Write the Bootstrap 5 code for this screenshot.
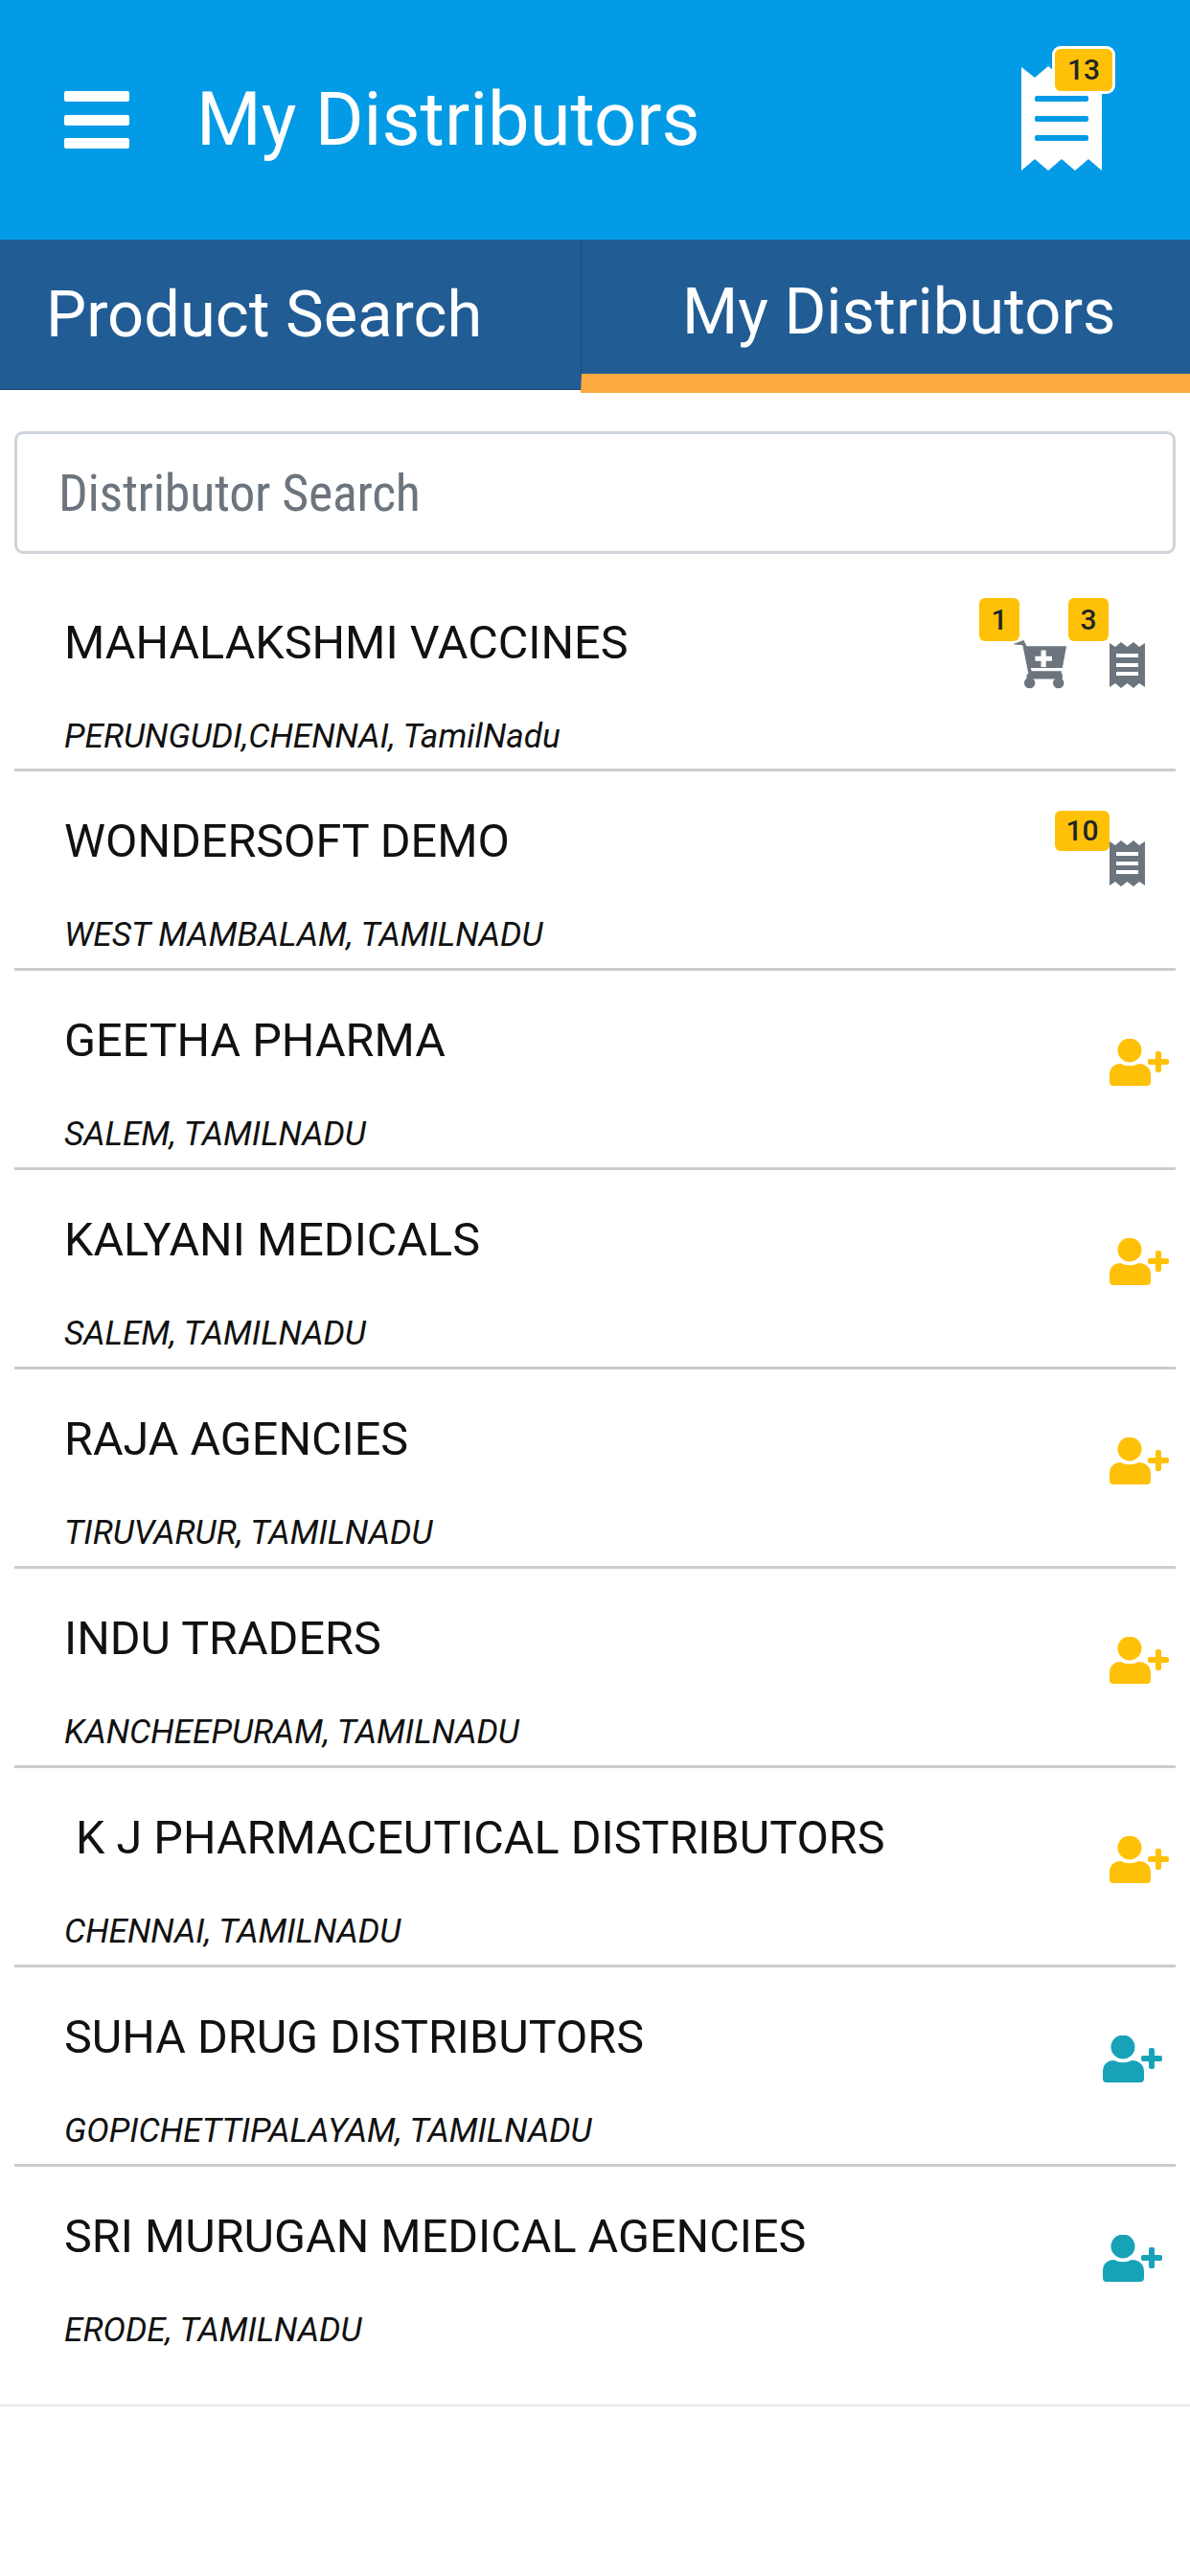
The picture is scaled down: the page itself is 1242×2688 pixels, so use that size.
<!DOCTYPE html>
<html lang="en">
<head>
    <meta charset="UTF-8">
    <meta name="viewport" content="width=device-width, initial-scale=1.0">
    <title>My Distributors</title>
    <link href="https://cdn.jsdelivr.net/npm/bootstrap@5.3.3/dist/css/bootstrap.min.css" rel="stylesheet">
    <style>
        body { font-family: Roboto, "Liberation Sans", sans-serif; background: #fff; }
        .app-bar { height: 250px; background: #039be5; padding: 0 92px 0 67px; }
        .menu-btn { width: 68px; height: 60px; margin-right: 70px; border: 0; background: none; padding: 0; }
        .app-title { font-size: 77.600px; line-height: 1; color: #fff; font-weight: 400; margin: 0; }
        .bill-wrap { position: relative; width: 84px; height: 111px; margin-bottom: 4px; }
        .count-tag { position: absolute; color: #212529; font-family: Roboto, sans-serif; font-weight: 500; font-size: 30px; line-height: 1; background: #ffc107; border-radius: 6px; padding: 0; display: flex; align-items: center; justify-content: center; }
        .tag-main { left: 32px; top: -20px; width: 66px; height: 50px; border: 3px solid #fff; border-radius: 9px; }
        .tab-strip { height: 157px; background: #215c94; }
        .tab-link { color: #fff; font-size: 66.800px; line-height: 1; height: 157px; display: flex; align-items: center; border-bottom: 1px solid #1c4a74; }
        .tab-link:hover { color: #fff; }
        .tab-one { width: 606px; padding: 0 0 0 48px; }
        .tab-two { width: 636px; height: 160px; padding: 10px 0 0 105px; border-left: 1px solid #1c4f80; border-bottom: 20px solid #fbab3f; }
        .search-box { padding: 43px 15px 19.500px; }
        .search-box .form-control { height: 128px; font-size: 54px; font-stretch: 75%; letter-spacing: -0.300px; padding: 0 43px; border: 3px solid #ced4da; border-radius: 9px; color: #6c757d; }
        .search-box .form-control::placeholder { color: #6c757d; }
        .list-group-flush .dist-row { height: 207.900px; margin: 0 15px; padding: 0; border: 0; border-bottom: 3px solid #ccc; border-radius: 0; position: relative; display: flex; justify-content: space-between; }
        .list-group-flush .dist-row.last-row { height: 250px; margin: 0; padding: 0 15px; border-bottom: 2px solid #e8e8e8; }
        .dist-name { font-size: 48.500px; line-height: 58px; color: #111; padding: 44px 0 0 52px; margin: 0; }
        .dist-place { font-size: 35.200px; line-height: 42px; font-style: italic; color: #111; padding: 47px 0 0 52px; margin: 0; }
        .dist-icons { position: relative; width: 210px; }
        .dist-icons svg { position: absolute; }
        .ico-cart { left: 40px; top: 70px; }
        .ico-bill { left: 141px; top: 71px; }
        .ico-gold { left: 141px; top: 71px; }
        .ico-teal { left: 134px; top: 71px; }
        .tag-cart { left: 5px; top: 26.500px; width: 42px; height: 45px; }
        .tag-bill { left: 98px; top: 26.500px; width: 42px; height: 45px; }
        .tag-wide { left: 84px; top: 40.500px; width: 57px; height: 42px; }
    </style>
</head>
<body>
    <header class="app-bar d-flex align-items-center">
        <button class="menu-btn d-flex flex-column justify-content-between" type="button" aria-label="Menu">
            <svg width="68" height="60" viewBox="0 0 68 60" fill="#fff"><rect y="0" width="68" height="11" rx="2"/><rect y="25" width="68" height="11" rx="2"/><rect y="49" width="68" height="11" rx="2"/></svg>
        </button>
        <h1 class="app-title flex-grow-1">My Distributors</h1>
        <div class="bill-wrap">
            <svg width="84" height="111" viewBox="0 0 84 111"><path fill="#fff" d="M0 2 L14 13 L28 1 L42 13 L56 1 L70 13 L84 2 V110 L70 98 L56 110 L42 98 L28 110 L14 98 L0 110 Z"/><rect x="14" y="32" width="56" height="6" rx="2" fill="#039be5"/><rect x="14" y="53" width="56" height="6" rx="2" fill="#039be5"/><rect x="14" y="73" width="56" height="6" rx="2" fill="#039be5"/></svg>
            <span class="count-tag tag-main">13</span>
        </div>
    </header>

    <nav class="nav tab-strip flex-nowrap">
        <a class="nav-link tab-link tab-one" href="#">Product Search</a>
        <a class="nav-link tab-link tab-two active" href="#">My Distributors</a>
    </nav>

    <div class="search-box">
        <input type="text" class="form-control" placeholder="Distributor Search">
    </div>

    <div class="list-group list-group-flush" id="dist-list"></div>

    <svg width="0" height="0" class="d-block">
        <symbol id="i-bill" viewBox="0 0 37 50"><path d="M0 2 L6 6 L12 1 L18.500 6 L25 1 L31 6 L37 2 V48 L31 44 L25 49 L18.500 44 L12 49 L6 44 L0 48 Z"/><rect x="7" y="13" width="23" height="4" fill="#fff"/><rect x="7" y="23" width="23" height="4" fill="#fff"/><rect x="7" y="32" width="23" height="4" fill="#fff"/></symbol>
        <symbol id="i-cart" viewBox="0 0 54 50"><path d="M0 4 L11 0 L14 6 H54 L50 28 H18 L19 31 H49 V35 H16 L10 5 Z"/><circle cx="17" cy="43" r="5.500"/><circle cx="46" cy="43" r="5.500"/><rect x="14" y="34" width="36" height="5"/><path fill="#fff" d="M28.500 10 h5 v6 h6 v5 h-6 v6 h-5 v-6 h-6 v-5 h6 z"/></symbol>
        <symbol id="i-user" viewBox="0 0 62 50"><circle cx="21" cy="12" r="12.500"/><path d="M0 38 C0 29 6 26 12 26 C17 29 25 29 30 26 C36 26 43 29 43 38 V45 Q43 49 39 49 H4 Q0 49 0 45 Z"/><rect x="40" y="21" width="22" height="6" rx="2"/><rect x="48" y="13" width="6" height="22" rx="2"/></symbol>
    </svg>

    <script>
        var distributors = [
            { name: "MAHALAKSHMI VACCINES", place: "PERUNGUDI,CHENNAI, TamilNadu", kind: "both" },
            { name: "WONDERSOFT DEMO", place: "WEST MAMBALAM, TAMILNADU", kind: "bill" },
            { name: "GEETHA PHARMA", place: "SALEM, TAMILNADU", kind: "gold" },
            { name: "KALYANI MEDICALS", place: "SALEM, TAMILNADU", kind: "gold" },
            { name: "RAJA AGENCIES", place: "TIRUVARUR, TAMILNADU", kind: "gold" },
            { name: "INDU TRADERS", place: "KANCHEEPURAM, TAMILNADU", kind: "gold" },
            { name: "\u00a0K J PHARMACEUTICAL DISTRIBUTORS", place: "CHENNAI, TAMILNADU", kind: "gold" },
            { name: "SUHA DRUG DISTRIBUTORS", place: "GOPICHETTIPALAYAM, TAMILNADU", kind: "teal" },
            { name: "SRI MURUGAN MEDICAL AGENCIES", place: "ERODE, TAMILNADU", kind: "teal" }
        ];

        function iconsFor(kind) {
            if (kind === "both") {
                return '<span class="count-tag tag-cart">1</span><svg class="ico-cart" width="56" height="52" fill="#6c757d"><use href="#i-cart"/></svg>' +
                    '<span class="count-tag tag-bill">3</span><svg class="ico-bill" width="37" height="50" fill="#6c757d"><use href="#i-bill"/></svg>';
            }
            if (kind === "bill") {
                return '<span class="count-tag tag-wide">10</span><svg class="ico-bill" width="37" height="50" fill="#6c757d"><use href="#i-bill"/></svg>';
            }
            if (kind === "gold") {
                return '<svg class="ico-gold" width="62" height="50" fill="#ffc107"><use href="#i-user"/></svg>';
            }
            return '<svg class="ico-teal" width="62" height="50" fill="#17a2b8"><use href="#i-user"/></svg>';
        }

        var list = document.getElementById("dist-list");
        distributors.forEach(function(d, i) {
            var row = document.createElement("div");
            row.className = "list-group-item dist-row" + (i === distributors.length - 1 ? " last-row" : "");
            row.innerHTML = '<div><p class="dist-name">' + d.name + '</p><p class="dist-place">' + d.place + '</p></div>' +
                '<div class="dist-icons">' + iconsFor(d.kind) + '</div>';
            list.appendChild(row);
        });
    </script>
    <script src="https://cdn.jsdelivr.net/npm/bootstrap@5.3.3/dist/js/bootstrap.bundle.min.js"></script>
</body>
</html>
